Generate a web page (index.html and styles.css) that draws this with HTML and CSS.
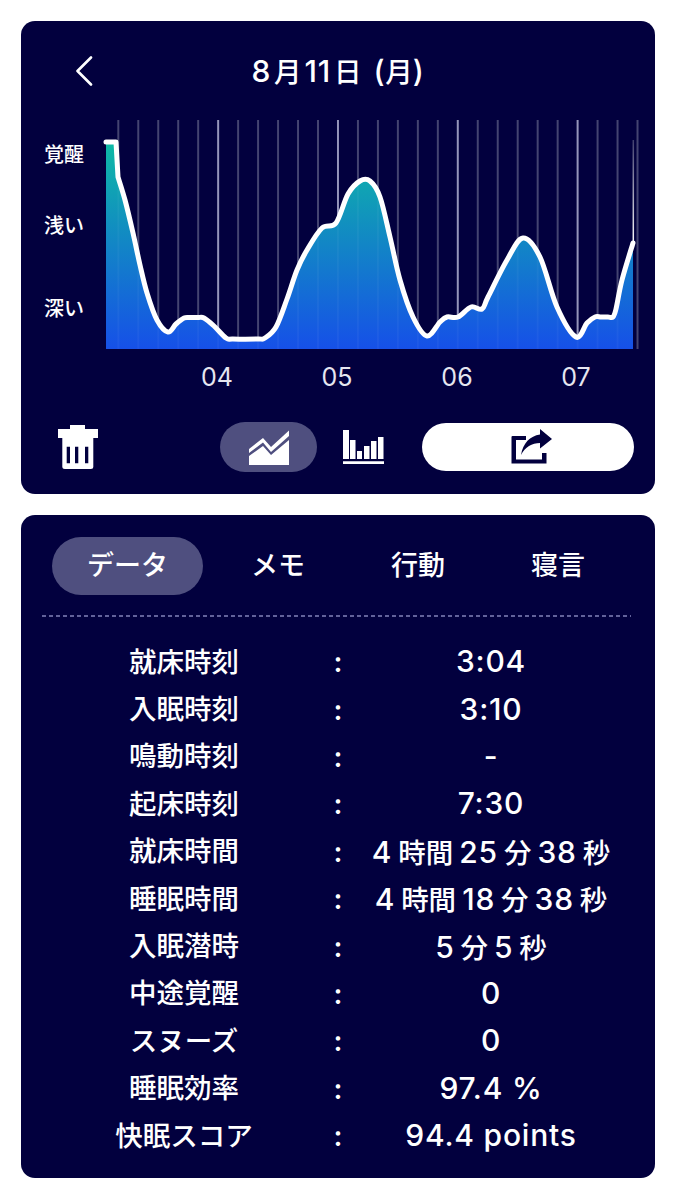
FILE: index.html
```html
<!DOCTYPE html>
<html lang="ja">
<head>
  <meta charset="UTF-8">
  <meta name="viewport" content="width=device-width, initial-scale=1.0">
  <title>睡眠データ</title>
  <link rel="stylesheet" href="styles.css">
</head>
<body>

<div class="card chart-card">
  <div class="chart-header">
    <button type="button" class="back-button" aria-label="戻る">
      <svg width="18" height="30" viewBox="0 0 18 30"><path d="M16 1.5 2.5 15 16 28.5" fill="none" stroke="#fff" stroke-width="2.6" stroke-linecap="round" stroke-linejoin="round"/></svg>
    </button>
    <h1 class="chart-title">8<span class="title-kanji">月</span>11<span class="title-kanji">日</span> (<span class="title-kanji paren">月</span>)</h1>
  </div>

  <!-- viewBox starts at the card's own offset so curve points read as plain coordinates -->
  <svg class="sleep-chart" id="sleepChart" width="634" height="294" viewBox="21 106 634 294">
    <defs>
      <linearGradient id="sleepFill" gradientUnits="userSpaceOnUse" x1="0" y1="140" x2="0" y2="349">
        <stop offset="0" stop-color="#0ebba4"/>
        <stop offset="1" stop-color="#1650e8"/>
      </linearGradient>
      <linearGradient id="tailFade" gradientUnits="userSpaceOnUse" x1="0" y1="140" x2="0" y2="245">
        <stop offset="0" stop-color="#fff" stop-opacity="0.25"/>
        <stop offset="1" stop-color="#fff"/>
      </linearGradient>
    </defs>
    <g id="gridLines"></g>
    <path id="sleepArea" fill="url(#sleepFill)"></path>
    <g id="gridOverlay"></g>
    <path d="M633.300 245V140" class="tail-line" stroke="url(#tailFade)"></path>
    <path id="sleepLine" class="sleep-line"></path>
    <text class="level-label" x="44" y="162">覚醒</text>
    <text class="level-label" x="44" y="233">浅い</text>
    <text class="level-label" x="44" y="316">深い</text>
    <text class="hour-label" x="217" y="386">04</text>
    <text class="hour-label" x="337" y="386">05</text>
    <text class="hour-label" x="457" y="386">06</text>
    <text class="hour-label" x="576" y="386">07</text>
  </svg>

  <div class="chart-tools">
    <button type="button" class="icon-button trash-button" aria-label="削除">
      <svg width="40" height="45" viewBox="0 0 40 45">
        <path d="M12 0H27V4H40V13H0V4H12Z" fill="#fff"/>
        <path d="M4.300 13H35.300V41.500A2.500 2.500 0 0 1 32.800 44H6.800A2.500 2.500 0 0 1 4.300 41.500Z" fill="#fff"/>
        <path d="M8.700 21.700H12V38.300H8.700ZM17 21.700H20.300V38.300H17ZM27 21.700H30.300V38.300H27Z" fill="#02003e"/>
      </svg>
    </button>
    <button type="button" class="view-toggle" aria-label="折れ線グラフ">
      <svg width="40" height="35" viewBox="0 0 40 35">
        <path d="M0 19 14 8 22 17 40 0.500V6L22 22 14 12.500 0 23Z" fill="#fff"/>
        <path d="M0 26 14 16 22 25 40 10V35H0Z" fill="#fff"/>
      </svg>
    </button>
    <button type="button" class="icon-button bars-button" aria-label="棒グラフ">
      <svg width="41" height="34" viewBox="0 0 41 34">
        <path d="M0 0H6V29H0ZM7 10H12.500V29H7ZM14 21H19V29H14ZM21 16H26.500V29H21ZM28 11H33.500V29H28ZM35 7H40.500V29H35Z" fill="#fff"/>
        <path d="M0 31.300H41V34H0Z" fill="#fff"/>
      </svg>
    </button>
    <button type="button" class="share-button" aria-label="共有">
      <svg width="42" height="36" viewBox="0 0 42 36">
        <path d="M1.500 7H15V11H5V30.500H31V24H35.500V34.500H0.500V8A1 1 0 0 1 1.500 7Z" fill="#02003e"/>
        <path d="M29 0 41 10 29 19.500V14C21 14 14 18 10 26 12 14 19 7 29 5.500Z" fill="#02003e"/>
      </svg>
    </button>
  </div>
</div>

<div class="card data-card">
  <div class="tabs">
    <div class="tab tab-active">データ</div>
    <div class="tab">メモ</div>
    <div class="tab">行動</div>
    <div class="tab">寝言</div>
  </div>
  <div class="tabs-rule"></div>

  <div class="data-list">
    <div class="data-label">就床時刻</div><div class="data-colon">:</div><div class="data-value">3:04</div>
    <div class="data-label">入眠時刻</div><div class="data-colon">:</div><div class="data-value">3:10</div>
    <div class="data-label">鳴動時刻</div><div class="data-colon">:</div><div class="data-value">-</div>
    <div class="data-label">起床時刻</div><div class="data-colon">:</div><div class="data-value">7:30</div>
    <div class="data-label">就床時間</div><div class="data-colon">:</div><div class="data-value">4<span class="unit">時間</span>25<span class="unit">分</span>38<span class="unit">秒</span></div>
    <div class="data-label">睡眠時間</div><div class="data-colon">:</div><div class="data-value">4<span class="unit">時間</span>18<span class="unit">分</span>38<span class="unit">秒</span></div>
    <div class="data-label">入眠潜時</div><div class="data-colon">:</div><div class="data-value">5<span class="unit">分</span>5<span class="unit">秒</span></div>
    <div class="data-label">中途覚醒</div><div class="data-colon">:</div><div class="data-value">0</div>
    <div class="data-label">スヌーズ</div><div class="data-colon">:</div><div class="data-value">0</div>
    <div class="data-label">睡眠効率</div><div class="data-colon">:</div><div class="data-value">97.4 %</div>
    <div class="data-label">快眠スコア</div><div class="data-colon">:</div><div class="data-value">94.4 points</div>
  </div>
</div>

<script>
  // Sleep depth curve, x = time, y = depth
  const points = [
    [118, 177], [125, 200], [133, 233], [140, 265], [147, 293], [157, 320], [168, 332],
    [176, 324], [184, 318], [190, 317.5], [198, 317.5], [204, 318], [214, 326], [226, 338],
    [233, 339], [258, 339], [265, 338], [276, 327], [287, 299], [297, 270], [307, 250],
    [322, 228], [336, 223], [348, 194], [360, 181], [370, 181], [380, 197], [390, 237],
    [400, 280], [413, 317], [427, 336], [440, 322], [447, 317], [458, 317], [471, 307],
    [482, 309], [488, 297], [507, 260], [523, 238], [540, 257], [557, 307], [576, 337],
    [587, 323], [595, 317], [601, 317], [608, 317], [613, 317], [616, 309], [622, 280], [633, 243]
  ];

  // Catmull-Rom through the points, written out as cubic segments
  let curve = 'M106 142H116L118 177';
  for (let i = 0; i < points.length - 1; i++) {
    const p0 = points[Math.max(i - 1, 0)];
    const p1 = points[i];
    const p2 = points[i + 1];
    const p3 = points[Math.min(i + 2, points.length - 1)];
    const c1 = [p1[0] + (p2[0] - p0[0]) / 6, p1[1] + (p2[1] - p0[1]) / 6];
    const c2 = [p2[0] - (p3[0] - p1[0]) / 6, p2[1] - (p3[1] - p1[1]) / 6];
    curve += `C${c1[0]} ${c1[1]} ${c2[0]} ${c2[1]} ${p2[0]} ${p2[1]}`;
  }
  document.getElementById('sleepLine').setAttribute('d', curve);
  document.getElementById('sleepArea').setAttribute('d', `${curve}V349H106Z`);

  // One line every 20px, every sixth one marks the hour
  const svgNS = 'http://www.w3.org/2000/svg';
  for (let i = 0; i <= 26; i++) {
    const x = 118.3 + i * 19.97;
    const isHour = i % 6 === 5;
    const line = document.createElementNS(svgNS, 'line');
    line.setAttribute('x1', x);
    line.setAttribute('x2', x);
    line.setAttribute('y1', 120);
    line.setAttribute('y2', 349);
    line.setAttribute('class', isHour ? 'grid-line hour-line' : 'grid-line');
    document.getElementById('gridLines').appendChild(line);

    // faint trace of the same line over the filled area
    const overlay = line.cloneNode();
    overlay.setAttribute('class', 'grid-overlay');
    document.getElementById('gridOverlay').appendChild(overlay);
  }
</script>

</body>
</html>
```

FILE: styles.css
```css
body {
  margin: 0;
  padding: 21px;
  background-color: #fff;
  font-family: Inter, 'Noto Sans CJK JP', sans-serif;
  color: #fff;
}

button {
  padding: 0;
  border: none;
  background: none;
  cursor: pointer;
  display: flex;
  align-items: center;
  justify-content: center;
}

/* Shared dark panels */
.card {
  width: 634px;
  background-color: #02003e;
  border-radius: 14px;
}

.chart-card {
  height: 473px;
  margin-bottom: 21px;
}

.data-card {
  height: 663px;
}

/* Chart header */
.chart-header {
  height: 85px;
  display: grid;
  grid-template-columns: 1fr auto 1fr;
  align-items: center;
}

.back-button {
  grid-column: 1;
  justify-self: start;
  margin-left: 54px;
  margin-top: 15px;
}

.chart-title {
  grid-column: 2;
  margin: 13px 0 0;
  font-size: 30px;
  font-weight: 540;
  letter-spacing: 0.8px;
  white-space: nowrap;
}

.title-kanji {
  margin: 0 3px;
  font-size: 27.5px;
  font-weight: 500;
  letter-spacing: 0;
}

.title-kanji.paren {
  margin: 0;
}

/* Sleep chart */
.sleep-chart {
  display: block;
}

.grid-line {
  stroke: #3d3d6c;
  stroke-width: 2;
}

.hour-line {
  stroke: #9191b8;
}

.grid-overlay {
  stroke: rgba(255, 255, 255, 0.04);
  stroke-width: 2;
}

.sleep-line {
  fill: none;
  stroke: #fff;
  stroke-width: 5;
  stroke-linejoin: round;
  stroke-linecap: round;
}

.tail-line {
  fill: none;
  stroke-width: 1.5;
}

.level-label {
  fill: #fff;
  font-size: 20px;
  font-weight: 500;
}

.hour-label {
  fill: #e6e6f0;
  font-size: 25px;
  font-weight: 400;
  text-anchor: middle;
}

/* Toolbar below the chart */
.chart-tools {
  display: flex;
  align-items: center;
  height: 50px;
  margin-top: 22px;
}

.trash-button {
  margin-left: 37px;
}

.view-toggle {
  width: 97px;
  height: 50px;
  margin-left: 122px;
  border-radius: 25px;
  background-color: #4f4f7f;
}

.bars-button {
  margin-left: 26px;
}

.share-button {
  width: 212px;
  height: 48px;
  margin-left: 38px;
  border-radius: 24px;
  background-color: #fff;
}

.share-button svg {
  margin-left: 8px;
}

/* Tabs */
.tabs {
  display: grid;
  grid-template-columns: 151px 150px 130px 150px;
  padding: 22px 0 0 31px;
  font-size: 27px;
  font-weight: 500;
  text-align: center;
}

.tab {
  height: 58px;
  line-height: 58px;
}

.tab-active {
  border-radius: 29px;
  background-color: #4f4f7f;
}

.tabs-rule {
  height: 2px;
  margin: 20px 24px 0 21px;
  background-image: repeating-linear-gradient(to right, #62629a 0, #62629a 4px, transparent 4px, transparent 7px);
}

/* Data table */
.data-list {
  display: grid;
  grid-template-columns: 284px 24px 282px;
  grid-auto-rows: 47.4px;
  align-items: center;
  padding: 19px 0 0 21px;
  font-size: 27.5px;
  font-weight: 500;
  text-align: center;
}

.data-label {
  white-space: nowrap;
}

.data-colon {
  padding-top: 5px;
  font-size: 28px;
  font-weight: 600;
}

.data-value {
  padding-top: 3px;
  font-size: 30px;
  font-weight: 540;
  letter-spacing: 0.8px;
  white-space: nowrap;
}

.unit {
  margin: 0 6px;
  font-size: 27.5px;
  font-weight: 500;
  letter-spacing: 0;
}

.unit:last-child {
  margin-right: 0;
}
```
